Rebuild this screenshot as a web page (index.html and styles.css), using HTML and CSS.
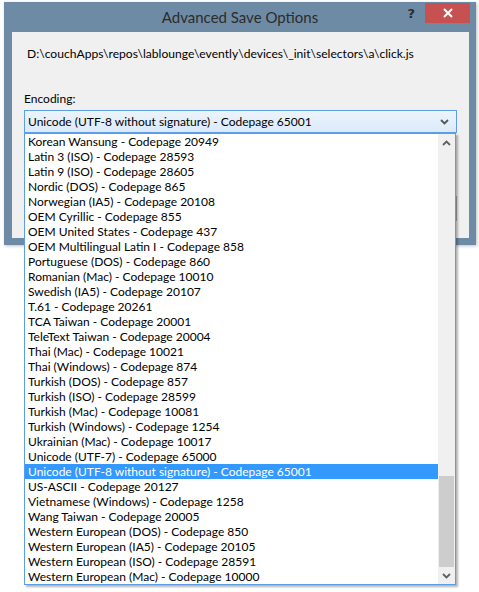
FILE: index.html
```html
<!DOCTYPE html>
<html>
<head>
<meta charset="utf-8">
<link rel="stylesheet" href="styles.css">
</head>
<body>
<div class="window">
  <div class="titlebar">
    <div></div>
    <div class="title">Advanced Save Options</div>
    <div class="controls">
      <span class="help">?</span>
      <span class="close"><svg width="10" height="10" viewBox="0 0 10 10"><path d="M1 1 L9 9 M9 1 L1 9" stroke="#fff" stroke-width="2"/></svg></span>
    </div>
  </div>
  <div class="client">
    <div class="path">D:\couchApps\repos\lablounge\evently\devices\_init\selectors\a\click.js</div>
    <div class="label">Encoding:</div>
    <div class="combo">
      <span>Unicode (UTF-8 without signature) - Codepage 65001</span>
      <svg class="chev" width="9" height="6" viewBox="0 0 9 6"><path d="M1 1 L4.5 4.5 L8 1" fill="none" stroke="#555" stroke-width="1.8"/></svg>
    </div>
    <div class="buttons">
      <div class="btn"></div>
    </div>
  </div>
</div>

<div class="droplist">
  <ul class="items">
    <li>Korean Wansung - Codepage 20949</li>
    <li>Latin 3 (ISO) - Codepage 28593</li>
    <li>Latin 9 (ISO) - Codepage 28605</li>
    <li>Nordic (DOS) - Codepage 865</li>
    <li>Norwegian (IA5) - Codepage 20108</li>
    <li>OEM Cyrillic - Codepage 855</li>
    <li>OEM United States - Codepage 437</li>
    <li>OEM Multilingual Latin I - Codepage 858</li>
    <li>Portuguese (DOS) - Codepage 860</li>
    <li>Romanian (Mac) - Codepage 10010</li>
    <li>Swedish (IA5) - Codepage 20107</li>
    <li>T.61 - Codepage 20261</li>
    <li>TCA Taiwan - Codepage 20001</li>
    <li>TeleText Taiwan - Codepage 20004</li>
    <li>Thai (Mac) - Codepage 10021</li>
    <li>Thai (Windows) - Codepage 874</li>
    <li>Turkish (DOS) - Codepage 857</li>
    <li>Turkish (ISO) - Codepage 28599</li>
    <li>Turkish (Mac) - Codepage 10081</li>
    <li>Turkish (Windows) - Codepage 1254</li>
    <li>Ukrainian (Mac) - Codepage 10017</li>
    <li>Unicode (UTF-7) - Codepage 65000</li>
    <li class="selected">Unicode (UTF-8 without signature) - Codepage 65001</li>
    <li>US-ASCII - Codepage 20127</li>
    <li>Vietnamese (Windows) - Codepage 1258</li>
    <li>Wang Taiwan - Codepage 20005</li>
    <li>Western European (DOS) - Codepage 850</li>
    <li>Western European (IA5) - Codepage 20105</li>
    <li>Western European (ISO) - Codepage 28591</li>
    <li>Western European (Mac) - Codepage 10000</li>
  </ul>
  <div class="scrollbar">
    <div class="sb-btn"><svg width="9" height="6" viewBox="0 0 9 6"><path d="M1 5 L4.5 1.5 L8 5" fill="none" stroke="#606060" stroke-width="1.8"/></svg></div>
    <div class="sb-track"><div class="sb-thumb"></div></div>
    <div class="sb-btn"><svg width="9" height="6" viewBox="0 0 9 6"><path d="M1 1 L4.5 4.5 L8 1" fill="none" stroke="#606060" stroke-width="1.8"/></svg></div>
  </div>
</div>
</body>
</html>
```

FILE: styles.css
```css
html, body {
  margin: 0;
  padding: 0;
  background: #ffffff;
}
body {
  font-family: "Segoe UI", Lato, "Open Sans", sans-serif;
  font-size: 12px;
  color: #000;
  position: relative;
  width: 479px;
  height: 592px;
  overflow: hidden;
}
.window {
  margin: 2px 0 0 4px;
  width: 472px;
  height: 243px;
  background: #6e8ba5;
  display: flex;
  flex-direction: column;
  box-shadow: 1px 1px 3px rgba(0,0,0,0.25);
}
.titlebar {
  height: 30px;
  display: grid;
  grid-template-columns: 1fr auto 1fr;
  align-items: start;
}
.title {
  font-size: 15px;
  color: #2b2b2b;
  line-height: 30px;
}
.controls {
  display: flex;
  justify-content: flex-end;
  align-items: start;
  padding-right: 6px;
}
.help {
  font-weight: bold;
  font-size: 13px;
  color: #2b2b2b;
  line-height: 20px;
  margin-top: 2px;
  margin-right: 10px;
  font-family: "DejaVu Sans", sans-serif;
}
.close {
  width: 45px;
  height: 20px;
  margin-top: 1px;
  background: #c75050;
  display: flex;
  align-items: center;
  justify-content: center;
}
.client {
  flex: 1;
  margin: 0 7px 7px 8px;
  background: #f0f0f0;
  padding: 14px 12px 0 12px;
  display: flex;
  flex-direction: column;
}
.path {
  line-height: 16px;
  padding-left: 3px;
  font-size: 12.1px;
}
.label {
  margin-top: 29px;
  line-height: 16px;
}
.combo {
  margin-top: 3px;
  height: 21px;
  border: 1px solid #5b9ee6;
  background: linear-gradient(#ecf4fc, #dbeafa);
  display: flex;
  align-items: center;
  justify-content: space-between;
  padding: 0 7px 0 3px;
}
.combo span {
  line-height: 21px;
}
.buttons {
  margin-top: 63px;
  display: flex;
  justify-content: flex-end;
}
.btn {
  width: 73px;
  height: 23px;
  border: 1px solid #acacac;
  background: #e1e1e1;
}
.droplist {
  position: absolute;
  left: 24px;
  top: 133px;
  width: 430px;
  height: 450px;
  border: 1px solid #5b9ee6;
  background: #ffffff;
  display: flex;
  box-shadow: 2px 2px 2px rgba(0,0,0,0.3);
}
.items {
  list-style: none;
  margin: 0;
  padding: 0;
  flex: 1;
}
.items li {
  height: 15px;
  line-height: 15px;
  padding-left: 3px;
  white-space: nowrap;
}
.items li.selected {
  background: #3399ff;
  color: #ffffff;
}
.scrollbar {
  width: 17px;
  background: #f0f0f0;
  display: flex;
  flex-direction: column;
}
.sb-btn {
  height: 17px;
  display: flex;
  align-items: center;
  justify-content: center;
}
.sb-track {
  flex: 1;
  display: flex;
  flex-direction: column;
  justify-content: flex-end;
}
.sb-thumb {
  height: 91px;
  margin: 0 1px 0 1px;
  background: #cdcdcd;
}
```
